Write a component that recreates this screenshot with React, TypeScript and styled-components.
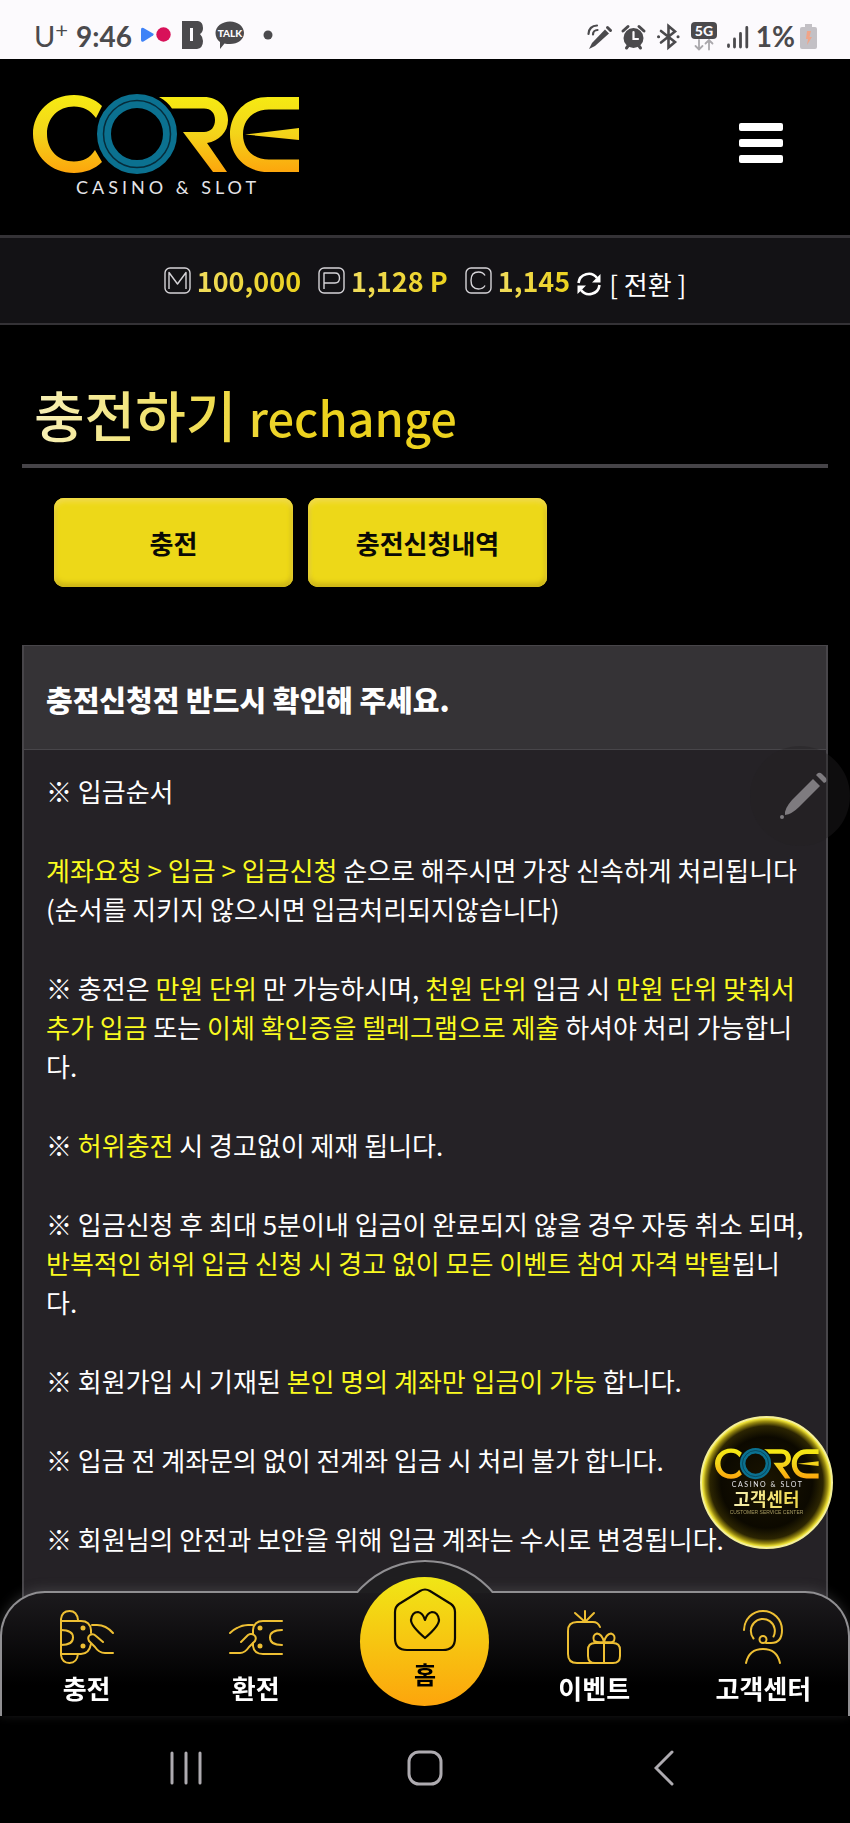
import React from 'react';
import styled, { createGlobalStyle } from 'styled-components';

const GlobalStyle = createGlobalStyle`
  *, *::before, *::after { box-sizing: border-box; }
  body {
    margin: 0;
    background: #000;
    color: #fff;
    font-family: "Noto Sans CJK KR", "Noto Sans", sans-serif;
  }
  a { color: inherit; text-decoration: none; }
  button { font: inherit; color: inherit; border: 0; padding: 0; background: none; cursor: pointer; }
  p, h1, h2 { margin: 0; }
  svg { display: block; }
`;

const Page = styled.div`
  display: flex;
  flex-direction: column;
  min-height: 100vh;
`;

const StatusBar = styled.div`
  display: flex;
  justify-content: space-between;
  height: 59px;
  padding: 16px 33px 0 34px;
  background: #fcfafd;
  color: #4b4a4d;
`;

const StatusGroup = styled.div<{ $gap: number }>`
  display: flex;
  align-items: center;
  gap: ${({ $gap }) => $gap}px;
  height: 40px;
`;

const Carrier = styled.span`
  display: flex;
  font: 29px/32px Lato, sans-serif;

  sup { font-size: 22px; line-height: 20px; }
`;

const Clock = styled.span`
  font: 700 28px/32px Lato, sans-serif;
`;

const Header = styled.header`
  display: flex;
  justify-content: space-between;
  align-items: center;
  height: 176px;
  padding: 0 67px 0 33px;
`;

const MenuButton = styled.button`
  display: flex;
  flex-direction: column;
  gap: 8px;
  width: 44px;
  margin-bottom: 8px;

  span { height: 8px; border-radius: 2px; background: #fff; }
`;

const BalanceBar = styled.section`
  display: flex;
  justify-content: center;
  align-items: center;
  gap: 17px;
  height: 90px;
  border-top: 3px solid #343236;
  border-bottom: 2px solid #343236;
  background: #131215;
`;

const Balance = styled.div`
  display: flex;
  align-items: center;
  gap: 6px;
`;

const Amount = styled.strong`
  background: linear-gradient(90deg, #f0dc5c, #ecd21e);
  background-clip: text;
  color: transparent;
  font-size: 27px;
  font-weight: 700;
  line-height: 40px;
`;

const ConvertButton = styled.button`
  display: flex;
  align-items: center;
  gap: 8px;
  margin: 6px 0 0 -10px;
  font-size: 26px;
  line-height: 36px;
`;

const Main = styled.main`
  display: flex;
  flex: 1;
  flex-direction: column;
  padding: 0 22px;
`;

const Title = styled.h1`
  margin-top: 52px;
  padding: 0 12px;
  height: 91px;
  border-bottom: 4px solid #464448;
  font-size: 55px;
  font-weight: 500;
  line-height: 72px;

  span {
    background: linear-gradient(90deg, #f7f0b8, #ecd21e 260px);
    background-clip: text;
    color: transparent;
  }
  small { font-size: 47px; }
`;

const Tabs = styled.div`
  display: flex;
  gap: 15px;
  margin: 30px 32px 58px;
`;

const TabButton = styled.button`
  width: 239px;
  height: 89px;
  border-radius: 10px;
  background: #edd818;
  box-shadow: inset 0 4px 5px #f2dc48, inset 0 -4px 5px #cdb516, inset -2px 0 4px #d6bf16, inset 2px 0 4px #e8d43a;
  color: #0a0a05;
  font-size: 26px;
  font-weight: 700;
`;

const Notice = styled.section`
  flex: 1;
  border: 1px solid #48464a;
  border-width: 1px 2px 0;
  background: #252226;
`;

const NoticeTitle = styled.h2`
  height: 104px;
  padding: 0 22px;
  border-bottom: 1px solid #48464a;
  background: #353336;
  font-size: 29px;
  font-weight: 900;
  line-height: 106px;
`;

const NoticeBody = styled.div`
  display: flex;
  flex-direction: column;
  gap: 40px;
  padding: 21px 18px 200px 22px;
  margin-bottom: -100px;
  font-size: 26px;
  line-height: 39px;
`;

const Mark = styled.span`
  color: #fafa20;
`;

const PenButton = styled.button`
  position: fixed;
  top: 746px;
  right: 0;
  display: grid;
  place-items: center;
  width: 100px;
  height: 100px;
  padding-left: 6px;
  border-radius: 50%;
  background: rgba(36, 33, 36, 0.4);
`;

const SupportBadge = styled.a`
  position: fixed;
  right: 17px;
  bottom: 274px;
  display: flex;
  flex-direction: column;
  align-items: center;
  width: 133px;
  height: 133px;
  padding-top: 30px;
  border: 2px solid #f3ef9a;
  border-radius: 50%;
  background: radial-gradient(circle, #1a1400 0%, #0c0900 50%, #2c2502 62%, #9a8b10 67%, #eee238 70%);

  strong {
    background: linear-gradient(90deg, #f6f0b0, #f0d84a);
    background-clip: text;
    color: transparent;
    font-size: 18px;
    line-height: 19px;
  }
  small {
    color: #a89c62;
    font: 5px/8px "Liberation Sans", sans-serif;
  }
`;

const Dock = styled.div`
  position: fixed;
  right: 0;
  bottom: 0;
  left: 0;
`;

const TabBar = styled.nav`
  position: relative;
  display: grid;
  grid-template-columns: repeat(5, 1fr);
  height: 125px;
  border: 2px solid #908f92;
  border-bottom: 0;
  border-radius: 45px 45px 0 0;
  background: linear-gradient(#1c1a1d, #000 75%);
  box-shadow: 0 -2px 12px rgba(120, 118, 122, 0.3);
`;

const Hump = styled.div`
  position: absolute;
  top: -33px;
  left: 50%;
  width: 138px;
  height: 33px;
  margin-left: -69px;
  overflow: hidden;

  &::before {
    content: '';
    position: absolute;
    left: -21px;
    width: 180px;
    height: 180px;
    border: 2px solid #908f92;
    border-radius: 50%;
    background: #1f1e20;
  }
`;

const TabLink = styled.a`
  display: flex;
  flex-direction: column;
  align-items: center;
  gap: 5px;
  padding-top: 17px;
  font-size: 26px;
  font-weight: 700;
  line-height: 38px;
`;

const HomeLink = styled.a`
  position: relative;
  justify-self: center;
  display: flex;
  flex-direction: column;
  align-items: center;
  width: 129px;
  height: 129px;
  margin-top: -16px;
  padding-top: 11px;
  border-radius: 50%;
  background: linear-gradient(#f0e616, #fda50c);
  color: #000;
  font-size: 24px;
  font-weight: 700;
  line-height: 44px;
`;

const SystemBar = styled.div`
  display: grid;
  grid-template-columns: repeat(3, 1fr);
  align-items: center;
  height: 107px;
  padding: 0 67px 4px;
  background: #000;

  button { display: grid; place-items: center; }
`;

function Logo({ width, id }: { width: number; id: string }) {
  return (
    <svg width={width} viewBox="0 0 267 106" role="img" aria-label="CORE Casino & Slot">
      <defs>
        <linearGradient id={id} x1="0" y1="0" x2="0" y2="79" gradientUnits="userSpaceOnUse">
          <stop offset="0" stopColor="#f6ec12" />
          <stop offset="0.5" stopColor="#f3d41a" />
          <stop offset="1" stopColor="#fda50c" />
        </linearGradient>
      </defs>
      <g fill={`url(#${id})`}>
        <path d="M69 12C62 5 52 1 41 1C18 1 0 18 0 40S18 79 41 79C52 79 62 75 69 68L62 56C57 64 50 67.500 41 67.500C25 67.500 14 56 14 40S25 12.500 41 12.500C50 12.500 57 16 63 24Z" />
        <path d="M126 3H171C185 3 195 13 195 26C195 38 186 47 174 49L194 78H180L150 38H171C178 38 182 33 182 26C182 19 178 14.500 171 14.500H139C136 10 132 6 126 3Z" />
        <path d="M266 3H235C213 3 197 19 197 40.500S213 78 235 78H266V65.500H236C220 65.500 210 55 210 40.500S220 15.500 236 15.500H266Z" />
        <path d="M212 40.500L266 34V46Z" />
      </g>
      <g fill="none">
        <circle cx="104" cy="40" r="33" stroke="#0b7190" strokeWidth="14" />
        <circle cx="104" cy="40" r="33.500" stroke="#062c3b" strokeWidth="1.500" />
      </g>
      <text x="43" y="100" fill="#e4e4e8" fontFamily="Lato, sans-serif" fontSize="18" letterSpacing="4">
        CASINO &amp; SLOT
      </text>
    </svg>
  );
}

function StatusLeftIcons() {
  return (
    <svg width="134" height="32" viewBox="0 0 134 32">
      <path d="M1 9.500Q1 7 3.500 8L13 13.500Q14.500 14.500 13 15.500L3.500 21.500Q1 22.500 1 20Z" fill="#3f82f7" />
      <circle cx="23.500" cy="14.500" r="7.200" fill="#d81159" />
      <path d="M42 1H58Q63 2 63 8Q63 12 60 14Q63 17 63 21Q63 28 57 29H42Z" fill="#4b4a4d" />
      <path d="M51.500 8V21" stroke="#fcfafd" strokeWidth="3" />
      <path d="M90 1.500C98 1.500 104 6.500 104 13S98 24 90 24C88 24 86 24 84.500 23.500L80 29V22C77 20 75.500 16.500 75.500 13C75.500 6.500 82 1.500 90 1.500Z" fill="#4b4a4d" />
      <text x="90" y="17" fill="#fcfafd" fontFamily="Lato, sans-serif" fontSize="10" fontWeight="900" textAnchor="middle">TALK</text>
      <circle cx="128" cy="15" r="4.500" fill="#4b4a4d" />
    </svg>
  );
}

function StatusRightIcons() {
  return (
    <svg width="164" height="30" viewBox="0 0 164 30" fill="none" stroke="#4b4a4d" strokeWidth="2.200" strokeLinecap="round">
      <path d="M1.500 13C1.500 8 5 4.500 10 4.500M6 13.500C6 11 8 9 10.500 9" />
      <path d="M5 22L18 8.500L22 12.500L8 25L2 28Z" fill="#4b4a4d" stroke="none" />
      <path d="M20.500 6.500L23.500 9.500" strokeWidth="3" />
      <circle cx="46.500" cy="17" r="10" fill="#4b4a4d" stroke="none" />
      <path d="M46.500 11V18H51" stroke="#fcfafd" />
      <path d="M36 10L41 5.500M52 5.500L57 10M39.500 27L41 25M53.500 27L52 25" strokeWidth="3" />
      <path d="M74 10L88 21L81.500 26.500V5L88 10.500L74 21.500" strokeWidth="2.600" />
      <path d="M71.500 15.800H71.600M91 15.800H91.100" strokeWidth="3" />
      <rect x="104" y="1" width="26" height="17" rx="4" fill="#4b4a4d" stroke="none" />
      <text x="117" y="14.500" fill="#fcfafd" stroke="none" fontFamily="Lato, sans-serif" fontSize="14" fontWeight="900" textAnchor="middle">5G</text>
      <path d="M112 19V28M108.500 25L112 28.500L115.500 25M122 28.500V19.500M118.500 22.500L122 19L125.500 22.500" stroke="#aaa8ac" strokeWidth="1.800" />
      <path d="M141.500 24V25.500M147.500 18V26M153.500 12.500V26M159.800 6.500V26" strokeWidth="2.800" />
    </svg>
  );
}

const Battery = () => (
  <svg width="17" height="25" viewBox="0 0 17 25">
    <path d="M5 0H12V3H15Q17 3 17 5V23Q17 25 15 25H2Q0 25 0 23V5Q0 3 2 3H5Z" fill="#c3c0c5" />
    <path d="M7 7H11L9.500 13H12L7 21L8 15H6Z" fill="#f0a488" />
  </svg>
);

const coins: Record<string, string> = {
  M: 'M5 22V5.500L13.500 17L22 5.500V22',
  P: 'M6 22V6H17Q21.500 6 21.500 11T17 16H6',
  C: 'M20 8.500Q18 5 13.500 5Q6 5 6 13.500T13.500 22Q18 22 20 18.500',
};

const CoinIcon = ({ kind }: { kind: string }) => (
  <svg width="27" height="27" viewBox="0 0 27 27" fill="none" stroke="#d6d4d8" strokeWidth="1.400" strokeLinejoin="round">
    <rect x="1" y="1" width="25" height="25" rx="5" />
    <path d={coins[kind]} />
  </svg>
);

const RefreshIcon = () => (
  <svg width="24" height="24" viewBox="0 0 24 24" fill="none" stroke="#fff" strokeWidth="2.600">
    <path d="M1.500 11A10.300 10.300 0 0 1 20 6M22.500 13A10.300 10.300 0 0 1 4 18" />
    <path d="M23.500 2V10.500H15ZM0.500 22V13.500H9Z" fill="#fff" stroke="none" />
  </svg>
);

const PenIcon = () => (
  <svg width="48" height="48" viewBox="0 0 48 48" fill="#7e7b7f">
    <path d="M34 7L41 14L20 35Q13 42 6 43Q5 37 13 28Z" />
    <path d="M39 1Q41 0 43 2L47 6Q48 8 47 10L45 11L37 3Z" />
    <circle cx="3" cy="45" r="2" />
  </svg>
);

type IconName = 'deposit' | 'withdraw' | 'event' | 'support';

function TabIcon({ name }: { name: IconName }) {
  return (
    <svg width="54" height="54" viewBox="0 0 54 54" fill="none" stroke="#eebf33" strokeWidth="2" strokeLinecap="round" strokeLinejoin="round">
      {name === 'deposit' && (
        <>
          <path d="M1 10V9Q2 1 9.500 1T18 10M1 44V45Q2 53 9.500 53T18 44M1 10V44M1 11H21Q30 11 31 20V23M1 44H21Q29 44 31 34" />
          <path d="M1 20Q13 20 13 27.500T1 35M32 15H37Q46 15 53 23M53 43H45Q39 43 35 37L29 31Q27 27 30 25Q33 23 36 26L43 32" />
          <circle cx="23" cy="18" r="1.500" fill="#eebf33" />
          <circle cx="23" cy="36" r="1.500" fill="#eebf33" />
        </>
      )}
      {name === 'withdraw' && (
        <>
          <path d="M53 11H34Q25 11 24 20V24M53 44H34Q25 44 24 36V33M53 20Q41 20 41 27.500T53 35" />
          <path d="M24 15H19Q10 15 1 23M1 43H11Q16 43 20 37L26 31Q28 27 25 25Q22 23 19 25L12 32" />
          <circle cx="31" cy="18" r="1.500" fill="#eebf33" />
          <circle cx="31" cy="36" r="1.500" fill="#eebf33" />
        </>
      )}
      {name === 'event' && (
        <>
          <path d="M18 11V1M17 11L8 3M19 11L27 3M33 17Q31 12 26 12H10Q1 12 1 21V44Q1 53 10 53H46Q53 53 53 46V40Q53 33 46 33H28Q21 33 21 40V46Q21 53 28 53" />
          <path d="M37 33V53M37 32Q31 33 27 31Q25 25 30 23.500Q35 24 37 32ZM37 32Q44 33 47 31Q49 25 44 23.500Q39 24 37 32Z" />
        </>
      )}
      {name === 'support' && (
        <>
          <path d="M8 20A19 19 0 0 1 46 20Q46 33 35 33H30M17.500 28.500A12 12 0 1 1 37.500 26.500" />
          <circle cx="27" cy="29.500" r="3.500" />
          <path d="M10 53Q13 39 27 39T44 53" />
        </>
      )}
    </svg>
  );
}

const HomeIcon = () => (
  <svg width="64" height="64" viewBox="0 0 64 64" fill="none" stroke="#0c0a02" strokeWidth="2.200" strokeLinejoin="round">
    <path d="M27 3Q32 0 37 3L58 16Q62 19 62 24V50Q62 62 50 62H14Q2 62 2 50V24Q2 19 6 16Z" />
    <path d="M32 50Q18 38 18 32Q19 24 25 24Q30 25 32 32Q34 25 39 24Q45 24 46 32Q46 38 32 50Z" />
  </svg>
);

const tabs: { name: IconName; label: string }[] = [
  { name: 'deposit', label: '충전' },
  { name: 'withdraw', label: '환전' },
  { name: 'event', label: '이벤트' },
  { name: 'support', label: '고객센터' },
];

const renderTab = ({ name, label }: { name: IconName; label: string }) => (
  <TabLink key={name} href={`#${name}`}>
    <TabIcon name={name} />
    {label}
  </TabLink>
);

function App() {
  return (
    <Page>
      <GlobalStyle />
      <StatusBar>
        <StatusGroup $gap={8}>
          <Carrier>U<sup>+</sup></Carrier>
          <Clock>9:46</Clock>
          <StatusLeftIcons />
        </StatusGroup>
        <StatusGroup $gap={5}>
          <StatusRightIcons />
          <Clock>1%</Clock>
          <Battery />
        </StatusGroup>
      </StatusBar>

      <Header>
        <a href="#top"><Logo width={267} id="logo-main" /></a>
        <MenuButton aria-label="메뉴">
          <span />
          <span />
          <span />
        </MenuButton>
      </Header>

      <BalanceBar>
        <Balance><CoinIcon kind="M" /><Amount>100,000</Amount></Balance>
        <Balance><CoinIcon kind="P" /><Amount>1,128 P</Amount></Balance>
        <Balance><CoinIcon kind="C" /><Amount>1,145</Amount></Balance>
        <ConvertButton><RefreshIcon />[ 전환 ]</ConvertButton>
      </BalanceBar>

      <Main>
        <Title><span>충전하기 <small>rechange</small></span></Title>
        <Tabs>
          <TabButton>충전</TabButton>
          <TabButton>충전신청내역</TabButton>
        </Tabs>
        <Notice>
          <NoticeTitle>충전신청전 반드시 확인해 주세요.</NoticeTitle>
          <NoticeBody>
            <p>※ 입금순서</p>
            <p>
              <Mark>계좌요청 &gt; 입금 &gt; 입금신청</Mark> 순으로 해주시면 가장 신속하게 처리됩니다<br />
              (순서를 지키지 않으시면 입금처리되지않습니다)
            </p>
            <p>
              ※ 충전은 <Mark>만원 단위</Mark> 만 가능하시며, <Mark>천원 단위</Mark> 입금 시 <Mark>만원 단위 맞춰서 추가 입금</Mark> 또는{' '}
              <Mark>이체 확인증을 텔레그램으로 제출</Mark> 하셔야 처리 가능합니다.
            </p>
            <p>※ <Mark>허위충전</Mark> 시 경고없이 제재 됩니다.</p>
            <p>
              ※ 입금신청 후 최대 5분이내 입금이 완료되지 않을 경우 자동 취소 되며,{' '}
              <Mark>반복적인 허위 입금 신청 시 경고 없이 모든 이벤트 참여 자격 박탈</Mark>됩니다.
            </p>
            <p>※ 회원가입 시 기재된 <Mark>본인 명의 계좌만 입금이 가능</Mark> 합니다.</p>
            <p>※ 입금 전 계좌문의 없이 전계좌 입금 시 처리 불가 합니다.</p>
            <p>※ 회원님의 안전과 보안을 위해 입금 계좌는 수시로 변경됩니다.</p>
          </NoticeBody>
        </Notice>
      </Main>

      <PenButton aria-label="펜"><PenIcon /></PenButton>
      <SupportBadge href="#support">
        <Logo width={104} id="logo-badge" />
        <strong>고객센터</strong>
        <small>CUSTOMER SERVICE CENTER</small>
      </SupportBadge>

      <Dock>
        <TabBar>
          <Hump />
          {tabs.slice(0, 2).map(renderTab)}
          <HomeLink href="#home"><HomeIcon />홈</HomeLink>
          {tabs.slice(2).map(renderTab)}
        </TabBar>
        <SystemBar>
          <button aria-label="최근 앱">
            <svg width="32" height="34" viewBox="0 0 32 34" stroke="#aeabb0" strokeWidth="3" strokeLinecap="round">
              <path d="M2 2V32M16 2V32M30 2V32" />
            </svg>
          </button>
          <button aria-label="홈 화면">
            <svg width="36" height="36" viewBox="0 0 36 36" fill="none" stroke="#aeabb0" strokeWidth="3">
              <rect x="2" y="2" width="32" height="32" rx="10" />
            </svg>
          </button>
          <button aria-label="뒤로">
            <svg width="20" height="36" viewBox="0 0 20 36" fill="none" stroke="#aeabb0" strokeWidth="3" strokeLinecap="round">
              <path d="M18 2L2 18L18 34" />
            </svg>
          </button>
        </SystemBar>
      </Dock>
    </Page>
  );
}

export default App;
